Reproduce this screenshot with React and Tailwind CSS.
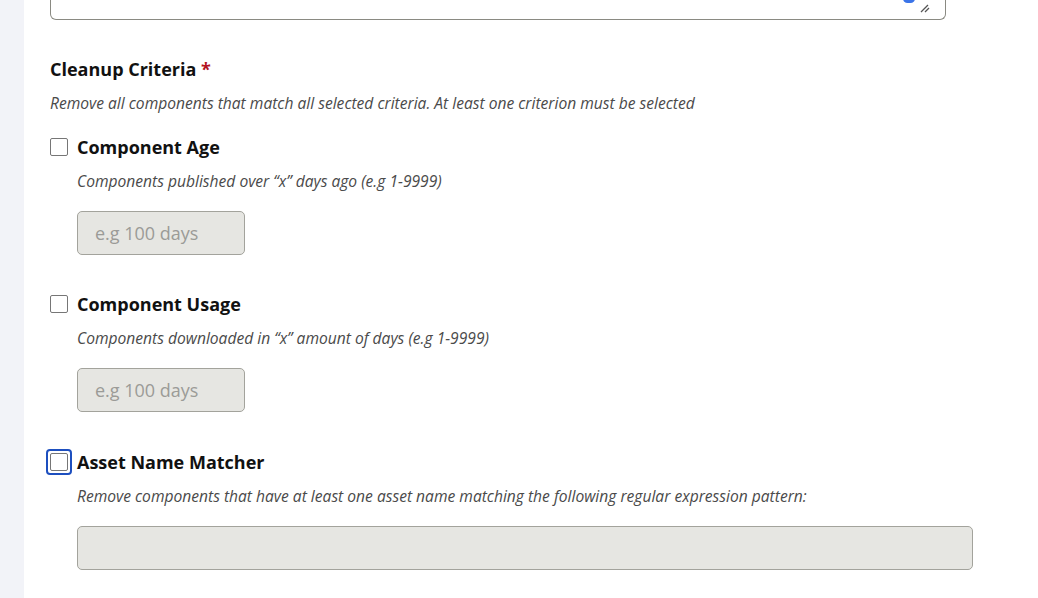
import React from "react";

function Checkbox({ focused }) {
  return (
    <div className="relative w-[18px] h-[18px] shrink-0">
      {focused && (
        <div className="absolute -inset-[4px] rounded-[4px] border-[2px] border-[#1d4fbf]" />
      )}
      <div className="w-[18px] h-[18px] rounded-[2px] border border-[#767676] bg-white" />
    </div>
  );
}

function Section({ title, desc, focused, wide, className }) {
  return (
    <div className={className}>
      <div className="flex items-center h-[24px] gap-[9px]">
        <Checkbox focused={focused} />
        <span className="text-[18px] font-bold text-[#111]">{title}</span>
      </div>
      <div className="pl-[27px]">
        <p className="mt-[11px] text-[15.6px] leading-[22px] italic text-[#4a4a4a]">{desc}</p>
        <div
          className={
            (wide ? "w-[896px]" : "w-[168px]") +
            " mt-[19px] h-[44px] rounded-[5px] border border-[#a3a39c] bg-[#e6e6e2] flex items-center px-[17px] text-[18px] text-[#9b9b97]"
          }
        >
          {wide ? "" : "e.g 100 days"}
        </div>
      </div>
    </div>
  );
}

export default function App() {
  return (
    <div
      className="flex w-[1038px] h-[598px] bg-white overflow-hidden"
      style={{ fontFamily: '"Open Sans", "Noto Sans", sans-serif' }}
    >
      <div className="w-[24px] shrink-0 bg-[#f2f3f8]" />
      <div className="pl-[26px] flex-1">
        <div className="relative w-[896px] h-[20px] border border-t-0 border-[#8a8a82] rounded-b-[6px] bg-white">
          <div className="absolute left-[852px] -top-[6px] w-[12px] h-[9px] rounded-full bg-[#3b74e8]" />
          <svg className="absolute left-[869px] top-[3px]" width="10" height="10" viewBox="0 0 10 10">
            <path d="M1 9 L8 2 M5 9 L9 5" stroke="#555" strokeWidth="1.3" fill="none" />
          </svg>
        </div>
        <h2 className="mt-[37px] text-[18px] leading-[24px] font-bold text-[#111]">
          Cleanup Criteria <span className="text-[#b3121f]">*</span>
        </h2>
        <p className="mt-[11px] text-[15.6px] leading-[22px] italic text-[#4a4a4a]">
          Remove all components that match all selected criteria. At least one criterion must be selected
        </p>
        <Section
          className="mt-[21px]"
          title="Component Age"
          desc="Components published over “x” days ago (e.g 1-9999)"
        />
        <Section
          className="mt-[37px]"
          title="Component Usage"
          desc="Components downloaded in “x” amount of days (e.g 1-9999)"
        />
        <Section
          className="mt-[38px]"
          focused
          wide
          title="Asset Name Matcher"
          desc="Remove components that have at least one asset name matching the following regular expression pattern:"
        />
      </div>
    </div>
  );
}
